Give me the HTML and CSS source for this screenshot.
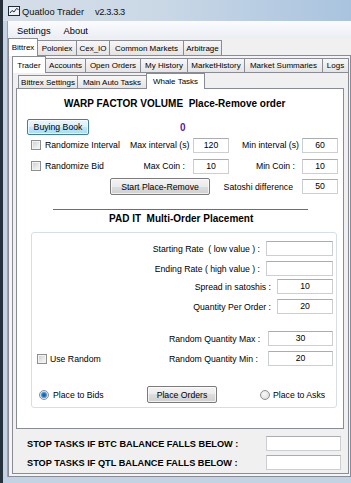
FILE: index.html
```html
<!DOCTYPE html>
<html>
<head>
<meta charset="utf-8">
<link rel="stylesheet" href="styles.css">
</head>
<body>
<div class="window">
  <div class="titlebar">
    <svg class="appicon" width="12" height="10" viewBox="0 0 12 10"><rect x="0.5" y="0.5" width="11" height="9" fill="#eef2f6" stroke="#1d2a38"/><polyline points="2,7 4,4.5 6,6 8.5,2.5 10.5,3.5" fill="none" stroke="#1d2a38" stroke-width="1"/></svg>
    <span class="apptitle">Quatloo Trader</span>
    <span class="appver">v2.3.3.3</span>
  </div>
  <div class="client">
    <div class="menubar"><span class="menu-item">Settings</span><span class="menu-item">About</span></div>
    <div class="tabs l1">
      <div class="tab sel w30">Bittrex</div>
      <div class="tab w40">Poloniex</div>
      <div class="tab w34">Cex_IO</div>
      <div class="tab w75">Common Markets</div>
      <div class="tab w39">Arbitrage</div>
    </div>
    <div class="panel outer">
      <div class="tabs l2">
        <div class="tab sel w34">Trader</div>
        <div class="tab w41">Accounts</div>
        <div class="tab w56">Open Orders</div>
        <div class="tab w48">My History</div>
        <div class="tab w58">MarketHistory</div>
        <div class="tab w79">Market Summaries</div>
        <div class="tab w27">Logs</div>
      </div>
      <div class="panel trader">
        <div class="tabs l3">
          <div class="tab w60">Bittrex Settings</div>
          <div class="tab w70">Main Auto Tasks</div>
          <div class="tab sel w59">Whale Tasks</div>
        </div>
        <div class="panel whale">
          <div class="w-title">WARP FACTOR VOLUME&nbsp; Place-Remove order</div>
          <div class="w-rowb">
            <button class="btn btn-blue bb">Buying Book</button>
            <span class="zero">0</span>
          </div>
          <div class="w-row rc">
            <span class="chk"></span><span class="cb-label">Randomize Interval</span>
            <span class="lbl-b">Max interval (s)</span><div class="inp w36">120</div>
            <span class="lbl-c">Min interval (s)</span><div class="inp w36">60</div>
          </div>
          <div class="w-row rd">
            <span class="chk"></span><span class="cb-label">Randomize Bid</span>
            <span class="lbl-b">Max Coin :</span><div class="inp w36">10</div>
            <span class="lbl-c">Min Coin :</span><div class="inp w36">10</div>
          </div>
          <div class="w-rowe">
            <button class="btn spr">Start Place-Remove</button>
            <span class="lbl-e">Satoshi difference</span><div class="inp w36">50</div>
          </div>
          <div class="sep"></div>
          <div class="w-title2">PAD IT&nbsp; Multi-Order Placement</div>
          <div class="group">
            <div class="g-row r1"><span class="g-lbl">Starting Rate&nbsp; ( low value ) :</span><div class="inp w67"></div></div>
            <div class="g-row r2"><span class="g-lbl">Ending Rate ( high value ) :</span><div class="inp w67"></div></div>
            <div class="g-row r3"><span class="g-lbl">Spread in satoshis :</span><div class="inp w56">10</div></div>
            <div class="g-row r4"><span class="g-lbl">Quantity Per Order :</span><div class="inp w56">20</div></div>
            <div class="g-row2 r5"><span class="g-left"></span><span class="g-lbl2">Random Quantity Max :</span><div class="inp w65">30</div></div>
            <div class="g-row2 r6"><span class="g-left pl5"><span class="chk"></span><span class="cb-text">Use Random</span></span><span class="g-lbl2">Random Quantity Min :</span><div class="inp w65">20</div></div>
            <div class="g-row3">
              <span class="g-left3"><span class="radio on"></span><span class="rad-text">Place to Bids</span></span>
              <button class="btn po">Place Orders</button>
              <span class="radio off ml43"></span><span class="rad-text2">Place to Asks</span>
            </div>
          </div>
        </div>
        <div class="stop-row s1"><span class="stop-lbl">STOP TASKS IF BTC BALANCE FALLS BELOW :</span><div class="inp w75"></div></div>
        <div class="stop-row s2"><span class="stop-lbl">STOP TASKS IF QTL BALANCE FALLS BELOW :</span><div class="inp w75"></div></div>
      </div>
    </div>
  </div>
</div>
</body>
</html>
```

FILE: styles.css
```css
* { box-sizing: border-box; margin: 0; padding: 0; }
html, body { width: 351px; height: 483px; overflow: hidden; }
body {
  background: #27313c;
  font-family: "Liberation Sans", Arial, sans-serif;
  font-size: 8.7px;
  color: #000;
}
.window {
  margin-left: 3px;
  width: 348px;
  height: 483px;
  background: #c3d3e4;
  display: flex;
  flex-direction: column;
}
.titlebar {
  height: 21px;
  flex: none;
  display: flex;
  align-items: center;
  padding-left: 5px;
  background: linear-gradient(to right, #d5dee8, #cad8e6 45%, #a9c3df);
}
.appicon { display: block; margin-top: 1px; }
.apptitle { margin-left: 2px; font-size: 9.3px; padding-top: 3px; color: #111; }
.appver { margin-left: 11px; font-size: 9.3px; padding-top: 3px; color: #111; letter-spacing: -0.4px; }

.client {
  flex: 1;
  margin-left: 4px;
  margin-bottom: 6px;
  width: 344px;
  border-left: 1px solid #95a4b4;
  background: #f0f0f0;
  display: flex;
  flex-direction: column;
}
.menubar {
  height: 17px;
  flex: none;
  display: flex;
  align-items: center;
  padding-left: 9px;
  padding-top: 2px;
  background: linear-gradient(#fcfcfd, #eaeef4);
  font-size: 9.3px;
}
.menu-item + .menu-item { margin-left: 13px; }

.tabs { display: flex; align-items: flex-end; flex: none; }
.tabs.l1 { height: 17px; }
.tabs.l2 { height: 16px; }
.tabs.l3 { height: 15px; padding-left: 2px; }
.tab {
  height: 15px;
  border: 1px solid #898c95;
  border-bottom: 0;
  margin-left: -1px;
  background: linear-gradient(#f7f7f7, #e4e4e4);
  font-size: 8px;
  display: flex;
  align-items: center;
  justify-content: center;
  white-space: nowrap;
  flex: none;
}
.tab:first-child { margin-left: 0; }
.l1 .tab.sel { height: 18px; }
.l2 .tab { height: 14px; }
.l2 .tab.sel { height: 17px; }
.l3 .tab { height: 13px; }
.l3 .tab.sel { height: 16px; }
.tab.sel {
  background: #fff;
  position: relative;
  z-index: 1;
  margin-bottom: -1px;
}
.w27 { width: 27px; } .w30 { width: 30px; } .w34 { width: 34px; } .w39 { width: 39px; }
.w40 { width: 40px; } .w41 { width: 41px; } .w48 { width: 48px; } .w56 { width: 56px; }
.w58 { width: 58px; } .w59 { width: 59px; } .w60 { width: 60px; } .w70 { width: 70px; }
.w75 { width: 75px; } .w79 { width: 79px; } .w36 { width: 36px; } .w65 { width: 65px; }
.w67 { width: 67px; }

.panel { border: 1px solid #898c95; }
.outer {
  flex: 1;
  display: flex;
  flex-direction: column;
  padding: 0 1px 2px 3px;
  background: #f4f4f4;
}
.trader {
  flex: 1;
  display: flex;
  flex-direction: column;
  padding: 0 4px 0 3px;
  background: #f0f0f0;
}
.whale {
  height: 341px;
  flex: none;
  background: #fff;
}

.w-title {
  margin-top: 9px;
  height: 12px;
  line-height: 12px;
  padding-left: 47px;
  font-weight: bold;
  font-size: 10px;
  white-space: nowrap;
}
.w-rowb {
  margin-top: 9px;
  height: 16px;
  display: flex;
  align-items: center;
  padding-left: 10px;
}
.zero { margin-left: 91px; color: #5a1d9c; font-weight: bold; font-size: 10px; }

.btn {
  font-family: "Liberation Sans", Arial, sans-serif;
  font-size: 8.7px;
  color: #000;
  border: 1px solid #7a7a7a;
  border-radius: 2px;
  background: linear-gradient(#f3f3f3, #ebebeb 50%, #dddddd 50%, #d0d0d0);
  box-shadow: inset 0 0 0 1px rgba(255,255,255,0.7);
  display: flex;
  align-items: center;
  justify-content: center;
  flex: none;
  white-space: nowrap;
}
.btn-blue {
  border-color: #3c7fb1;
  background: linear-gradient(#eaf6fd, #d9f0fc 50%, #bee6fd 50%, #a9dbf6);
}
.bb { width: 62px; height: 16px; }
.spr { width: 100px; height: 17px; }
.po { width: 70px; height: 17px; }

.w-row {
  height: 16px;
  display: flex;
  align-items: center;
  padding-left: 14px;
  white-space: nowrap;
}
.rc { margin-top: 2px; }
.rd { margin-top: 5px; }
.chk {
  width: 10px;
  height: 10px;
  flex: none;
  border: 1px solid #8e8f8f;
  background: linear-gradient(135deg, #c9cdd2, #eeeeee 70%, #f8f8f8);
  box-shadow: inset 0 0 0 1px #f3f3f3;
}
.cb-label { width: 85px; margin-left: 4px; }
.lbl-b { width: 63px; text-align: right; }
.lbl-c { width: 73px; text-align: right; }
.rc .lbl-b { padding-right: 5px; }
.rd .lbl-b { padding-right: 8px; }
.rc .lbl-c { padding-right: 3px; }
.rd .lbl-c { padding-right: 7px; }

.inp {
  height: 15px;
  flex: none;
  border: 1px solid #cbced3;
  border-top-color: #a9acb3;
  background: #fff;
  text-align: center;
  line-height: 13px;
  font-size: 8.7px;
}

.w-rowe {
  margin-top: 4px;
  height: 17px;
  display: flex;
  align-items: center;
  padding-left: 93px;
  white-space: nowrap;
}
.lbl-e { width: 92px; text-align: right; padding-right: 9px; }

.sep {
  margin-top: 14px;
  margin-left: 36px;
  width: 255px;
  height: 1px;
  background: #6e6e6e;
}
.w-title2 {
  margin-top: 3px;
  height: 12px;
  line-height: 12px;
  padding-left: 92px;
  font-weight: bold;
  font-size: 10px;
  white-space: nowrap;
}
.group {
  margin-top: 7px;
  margin-left: 14px;
  width: 306px;
  height: 176px;
  border: 1px solid #d5dfe5;
  border-radius: 3px;
}
.g-row {
  height: 15px;
  display: flex;
  align-items: center;
  justify-content: flex-end;
  padding-right: 3px;
  white-space: nowrap;
}
.g-lbl { margin-right: 6px; }
.r1 { margin-top: 8px; }
.r2 { margin-top: 5px; }
.r3 { margin-top: 3px; }
.r4 { margin-top: 5px; }
.r5 { margin-top: 17px; }
.r6 { margin-top: 5px; }
.g-row2 {
  height: 15px;
  display: flex;
  align-items: center;
  white-space: nowrap;
}
.g-left { width: 137px; display: flex; align-items: center; flex: none; }
.pl5 { padding-left: 5px; }
.cb-text { margin-left: 3px; }
.g-lbl2 { width: 99px; flex: none; }
.g-row3 {
  margin-top: 20px;
  height: 17px;
  display: flex;
  align-items: center;
  white-space: nowrap;
}
.g-left3 { width: 115px; display: flex; align-items: center; padding-left: 7px; flex: none; }
.radio {
  width: 10px;
  height: 10px;
  border-radius: 50%;
  border: 1px solid #8f8f8f;
  flex: none;
}
.radio.on {
  background: radial-gradient(circle, #1d4f9c 0, #2c78c8 1.8px, #6fb6ea 3px, #dfe6ee 3.6px, #f6f6f6 5px);
}
.radio.off {
  background: radial-gradient(circle at 40% 40%, #f9f9f9, #d6d6d6);
}
.rad-text { margin-left: 4px; }
.ml43 { margin-left: 43px; }
.rad-text2 { margin-left: 3px; }

.stop-row {
  height: 15px;
  display: flex;
  align-items: center;
  padding-left: 11px;
  white-space: nowrap;
}
.s1 { margin-top: 7px; }
.s2 { margin-top: 4px; }
.stop-lbl { width: 239px; font-weight: bold; font-size: 9.2px; flex: none; }
```
